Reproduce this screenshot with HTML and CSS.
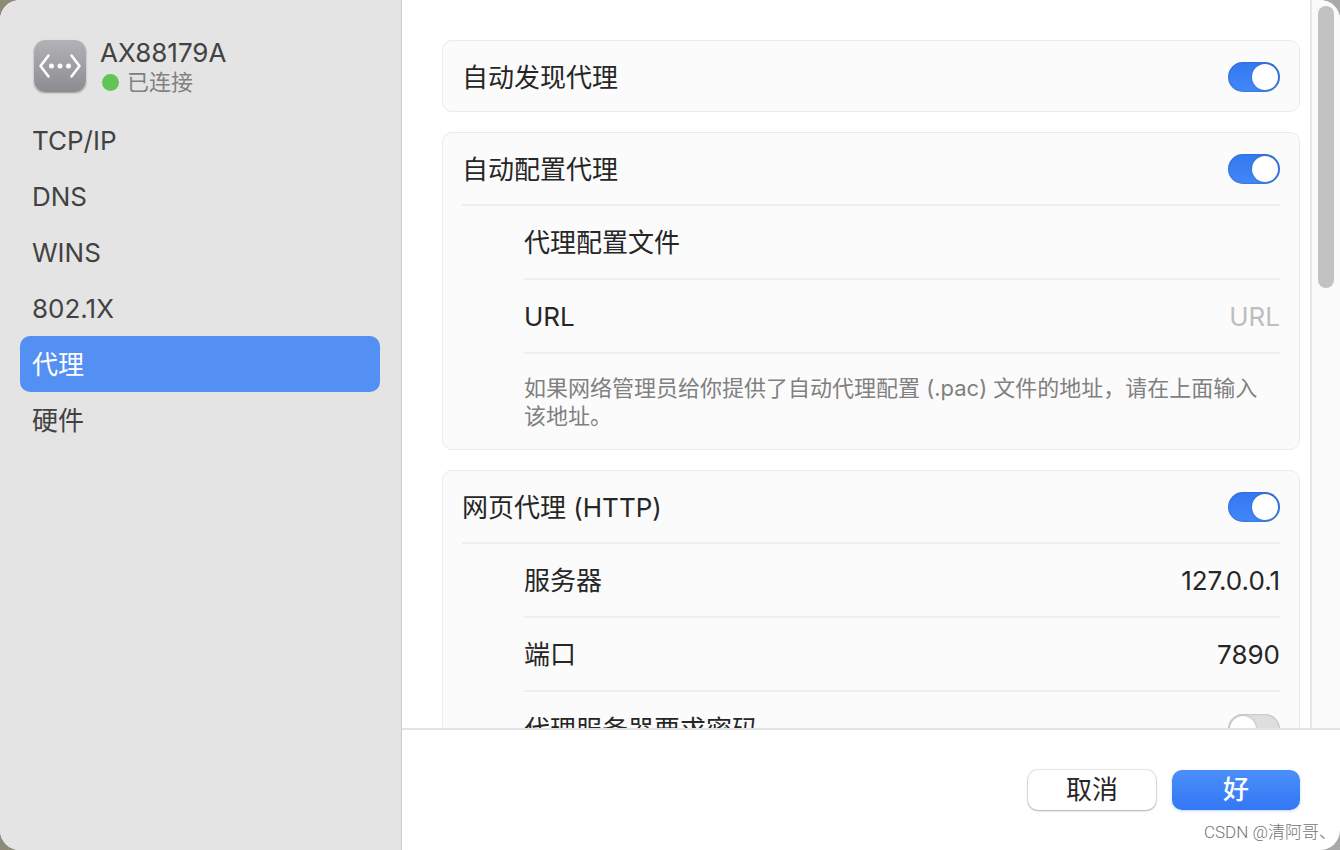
FILE: index.html
```html
<!DOCTYPE html>
<html lang="zh-CN">
<head>
<meta charset="utf-8">
<title>代理</title>
<link rel="stylesheet" href="styles.css">
</head>
<body>
<div class="window">
  <aside class="sidebar">
    <header class="device">
      <svg class="device-icon" viewBox="0 0 52 52" aria-hidden="true">
        <defs>
          <linearGradient id="tile" x1="0" y1="0" x2="0" y2="1">
            <stop offset="0" stop-color="#b3b2b7"/>
            <stop offset="1" stop-color="#8c8b91"/>
          </linearGradient>
        </defs>
        <rect width="52" height="52" rx="11" fill="url(#tile)"/>
        <path d="M14.500 15.500 L6.500 26 L14.500 36.500 M37.500 15.500 L45.500 26 L37.500 36.500" fill="none" stroke="#fff" stroke-width="2.600" stroke-linecap="round" stroke-linejoin="round"/>
        <circle cx="17.500" cy="26" r="2.500" fill="#fff"/>
        <circle cx="26" cy="26" r="2.500" fill="#fff"/>
        <circle cx="34.500" cy="26" r="2.500" fill="#fff"/>
      </svg>
      <div class="device-text">
        <h1 class="device-name">AX88179A</h1>
        <p class="device-status"><span class="dot"></span>已连接</p>
      </div>
    </header>
    <nav class="nav">
      <a class="nav-item" href="#tcpip">TCP/IP</a>
      <a class="nav-item" href="#dns">DNS</a>
      <a class="nav-item" href="#wins">WINS</a>
      <a class="nav-item" href="#8021x">802.1X</a>
      <a class="nav-item selected" href="#proxy" aria-current="page">代理</a>
      <a class="nav-item" href="#hardware">硬件</a>
    </nav>
  </aside>
  <main class="main">
    <div class="pane">
      <form class="settings" id="settings">
        <section class="card">
          <div class="row head">
            <label class="label" for="discover">自动发现代理</label>
            <input class="switch" type="checkbox" id="discover" checked>
          </div>
        </section>
        <section class="card">
          <div class="row head">
            <label class="label" for="auto">自动配置代理</label>
            <input class="switch" type="checkbox" id="auto" checked>
          </div>
          <div class="group">
            <div class="row"><span class="label">代理配置文件</span></div>
            <div class="row">
              <label class="label" for="url">URL</label>
              <input class="field" type="text" id="url" placeholder="URL">
            </div>
            <p class="note">如果网络管理员给你提供了自动代理配置 (.pac) 文件的地址，请在上面输入该地址。</p>
          </div>
        </section>
        <section class="card">
          <div class="row head">
            <label class="label" for="http">网页代理 (HTTP)</label>
            <input class="switch" type="checkbox" id="http" checked>
          </div>
          <div class="group">
            <div class="row">
              <label class="label" for="server">服务器</label>
              <input class="field" type="text" id="server" value="127.0.0.1">
            </div>
            <div class="row">
              <label class="label" for="port">端口</label>
              <input class="field" type="text" id="port" value="7890">
            </div>
            <div class="row">
              <label class="label" for="password">代理服务器要求密码</label>
              <input class="switch" type="checkbox" id="password">
            </div>
          </div>
        </section>
      </form>
      <div class="track"><div class="thumb"></div></div>
    </div>
    <footer class="footer">
      <button class="button" type="button">取消</button>
      <button class="button primary" type="submit" form="settings">好</button>
    </footer>
  </main>
</div>
<div class="watermark">CSDN @清阿哥、</div>
</body>
</html>
```
FILE: styles.css
```css
* {
  box-sizing: border-box;
}

body {
  margin: 0;
  background: linear-gradient(90deg, #8d8a78 0, #a9a9a9 50%, #a9a9a9 100%);
  font-family: Inter, "Noto Sans CJK SC", sans-serif;
  font-size: 26px;
  line-height: 32px;
  color: #262626;
}

.window {
  display: flex;
  height: 100vh;
  border-radius: 20px;
  overflow: hidden;
  background: #fff;
}

.sidebar {
  flex: 0 0 30%;
  padding: 36px 21px 36px 20px;
  background: #e4e4e4;
  border-right: 1px solid #cbcbcb;
  color: #424242;
}

.device {
  display: flex;
  gap: 14px;
  height: 76px;
  padding: 4px 14px 0;
}

.device-icon {
  width: 52px;
  height: 52px;
  border-radius: 11px;
  box-shadow: 0 1px 2px rgba(0, 0, 0, 0.35);
}

.device-name {
  margin: 0;
  font-size: 26px;
  font-weight: 400;
  line-height: 26px;
}

.device-status {
  display: flex;
  align-items: center;
  gap: 8px;
  margin: 0;
  padding-left: 2px;
  font-size: 22px;
  line-height: 32px;
  color: #808080;
}

.dot {
  width: 17px;
  height: 17px;
  border-radius: 50%;
  background: #61c555;
}

.nav {
  display: flex;
  flex-direction: column;
}

.nav-item {
  padding: 13px 12px 11px;
  border-radius: 10px;
  color: inherit;
  text-decoration: none;
}

.selected {
  background: #548ff4;
  color: #fff;
}

.main {
  flex: 1;
  min-width: 0;
  display: flex;
  flex-direction: column;
}

.pane {
  flex: 1;
  min-height: 0;
  display: flex;
}

.settings {
  flex: 1;
  min-width: 0;
  padding: 40px 10px 40px 40px;
  overflow-y: auto;
  scrollbar-width: none;
}

.card {
  margin-bottom: 20px;
  padding: 0 19px;
  background: #fbfbfb;
  border: 1px solid #ebebeb;
  border-radius: 10px;
}

.row {
  display: flex;
  align-items: center;
  justify-content: space-between;
  height: 74px;
  border-bottom: 2px solid #eeeeee;
}

.row:last-child {
  border-bottom: 0;
}

.head {
  height: 73px;
}

.head:last-child {
  height: 70px;
  padding-top: 2px;
}

.label {
  padding-top: 2px;
}

.group {
  padding-left: 62px;
}

.note {
  margin: 0;
  padding: 20px 12px 19px 0;
  font-size: 22px;
  line-height: 28px;
  color: #808080;
}

.field {
  flex: 1;
  min-width: 0;
  padding: 2px 0 0;
  border: 0;
  outline: 0;
  background: none;
  font: inherit;
  color: inherit;
  text-align: right;
}

.field::placeholder {
  color: #bebebe;
  opacity: 1;
}

.switch {
  appearance: none;
  display: flex;
  width: 52px;
  height: 30px;
  margin: 0;
  padding: 2px;
  border-radius: 15px;
  background: #dedede;
  box-shadow: inset 0 0 2px rgba(0, 0, 0, 0.3);
}

.switch::before {
  content: "";
  width: 26px;
  height: 26px;
  border-radius: 50%;
  background: #fff;
  box-shadow: 0 0 2px rgba(0, 0, 0, 0.3);
}

.switch:checked {
  justify-content: flex-end;
  background: linear-gradient(#3478f0, #4187f7);
}

.track {
  flex: 0 0 30px;
  padding: 6px;
  background: #fafafa;
  border-left: 2px solid #e6e6e6;
}

.thumb {
  width: 16px;
  height: 39.4%;
  border-radius: 8px;
  background: #c2c2c2;
}

.footer {
  display: flex;
  justify-content: flex-end;
  gap: 16px;
  padding: 40px;
  border-top: 2px solid #e4e4e4;
}

.button {
  width: 128px;
  height: 40px;
  padding: 0;
  border: 0;
  border-radius: 10px;
  background: #fff;
  box-shadow: 0 0 1px 1px rgba(0, 0, 0, 0.1), 0 1px 2px rgba(0, 0, 0, 0.25);
  font: inherit;
  color: inherit;
}

.primary {
  background: linear-gradient(#4a8ff9, #3377f5);
  box-shadow: 0 1px 3px rgba(51, 119, 245, 0.3);
  font-weight: 500;
  color: #fff;
}

.watermark {
  position: absolute;
  right: 4px;
  bottom: 8px;
  font-family: Roboto, "Noto Sans CJK SC", sans-serif;
  font-size: 17px;
  font-weight: 300;
  line-height: 20px;
  color: #757575;
}
```
